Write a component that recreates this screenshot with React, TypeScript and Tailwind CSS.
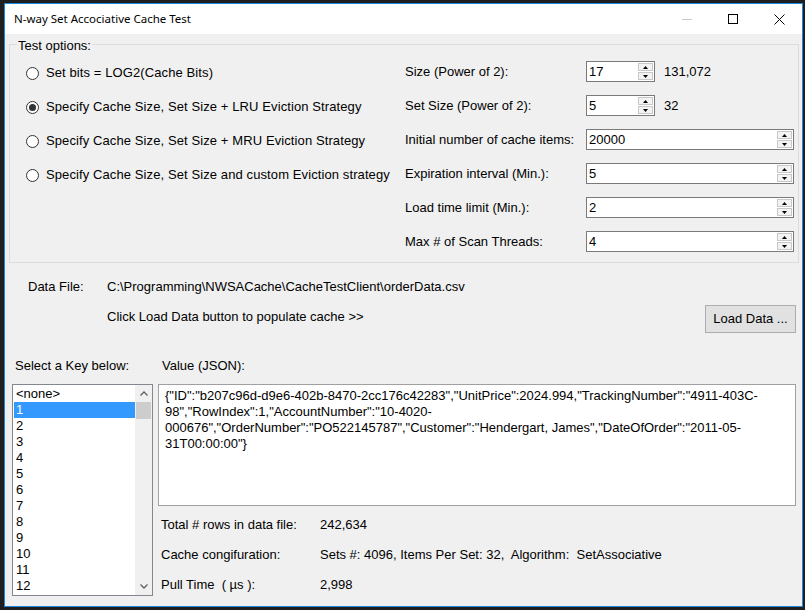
const ui = "font-['Liberation_Sans',Arial,sans-serif]";

function Arrow({ up }: { up?: boolean }) {
  return (
    <svg width="5" height="3" viewBox="0 0 5 3">
      <path d={up ? 'M0 3 L2.5 0 L5 3 Z' : 'M0 0 L2.5 3 L5 0 Z'} fill="#000" />
    </svg>
  );
}

function Spin({ value, wide }: { value: string; wide?: boolean }) {
  return (
    <div className={`flex h-[21px] border border-[#7a7a7a] bg-white ${wide ? 'w-[208px]' : 'w-[69px]'}`}>
      <span className="flex-1 pl-[2px] leading-[19px]">{value}</span>
      <div className="flex w-[16px] flex-col gap-px py-px pr-px">
        <div className="flex flex-1 items-center justify-center border border-[#c8c8c8] bg-[#f3f3f3]">
          <Arrow up />
        </div>
        <div className="flex flex-1 items-center justify-center border border-[#c8c8c8] bg-[#f3f3f3]">
          <Arrow />
        </div>
      </div>
    </div>
  );
}

function Radio({ label, checked }: { label: string; checked?: boolean }) {
  return (
    <div className="flex h-[34px] items-center gap-[7px] whitespace-nowrap">
      <span className="flex h-[13px] w-[13px] items-center justify-center rounded-full border border-[#333] bg-white">
        {checked && <span className="h-[7px] w-[7px] rounded-full bg-[#333]" />}
      </span>
      <span className="tracking-[0.1px]">{label}</span>
    </div>
  );
}

const RADIOS = [
  'Set bits = LOG2(Cache Bits)',
  'Specify Cache Size, Set Size + LRU Eviction Strategy',
  'Specify Cache Size, Set Size + MRU Eviction Strategy',
  'Specify Cache Size, Set Size and custom Eviction strategy',
];

const FIELDS: { label: string; value: string; wide?: boolean; extra?: string }[] = [
  { label: 'Size (Power of 2):', value: '17', extra: '131,072' },
  { label: 'Set Size (Power of 2):', value: '5', extra: '32' },
  { label: 'Initial number of cache items:', value: '20000', wide: true },
  { label: 'Expiration interval (Min.):', value: '5', wide: true },
  { label: 'Load time limit (Min.):', value: '2', wide: true },
  { label: 'Max # of Scan Threads:', value: '4', wide: true },
];

const KEYS = ['<none>', '1', '2', '3', '4', '5', '6', '7', '8', '9', '10', '11', '12'];

const JSON_LINES = [
  '{"ID":"b207c96d-d9e6-402b-8470-2cc176c42283","UnitPrice":2024.994,"TrackingNumber":"4911-403C-',
  '98","RowIndex":1,"AccountNumber":"10-4020-',
  '000676","OrderNumber":"PO522145787","Customer":"Hendergart, James","DateOfOrder":"2011-05-',
  '31T00:00:00"}',
];

const STATS = [
  ['Total # rows in data file:', '242,634'],
  ['Cache congifuration:', 'Sets #: 4096, Items Per Set: 32,  Algorithm:  SetAssociative'],
  ['Pull Time  ( µs ):', '2,998'],
];

export default function App() {
  return (
    <div className="h-[610px] w-[805px] overflow-hidden bg-[#1f1f1f] pl-[4px] pt-[3px]">
      <div className="flex h-[604px] w-[799px] flex-col border border-[#1c86dc]">
        {/* Title bar */}
        <div className="flex h-[30px] items-center bg-white">
          <span className="pl-[9px] font-['Noto_Sans',sans-serif] text-[11.5px] text-black">
            N-way Set Accociative Cache Test
          </span>
          <div className="ml-auto flex h-full">
            <div className="flex w-[46px] items-center justify-center">
              <svg width="10" height="10" viewBox="0 0 10 10">
                <path d="M0 5.5 H10" stroke="#c8c8c8" strokeWidth="1" />
              </svg>
            </div>
            <div className="flex w-[46px] items-center justify-center">
              <svg width="10" height="10" viewBox="0 0 10 10">
                <rect x="0.5" y="0.5" width="9" height="9" fill="none" stroke="#000" strokeWidth="1" />
              </svg>
            </div>
            <div className="flex w-[46px] items-center justify-center">
              <svg width="11" height="11" viewBox="0 0 11 11">
                <path d="M0.5 0.5 L10.5 10.5 M10.5 0.5 L0.5 10.5" stroke="#000" strokeWidth="1" />
              </svg>
            </div>
          </div>
        </div>

        {/* Client area */}
        <div className={`flex flex-1 flex-col bg-[#f0f0f0] text-[13px] leading-[16px] text-black ${ui}`}>
          {/* Test options group */}
          <div className="relative ml-[4px] mr-[3px] mt-[10px] flex h-[219px] border border-[#dcdcdc]">
            <span className="absolute -top-[7px] left-[7px] bg-[#f0f0f0] px-[1px]">Test options:</span>
            <div className="flex w-[395px] flex-col pl-[16px] pt-[11px]">
              {RADIOS.map((r, i) => (
                <Radio key={r} label={r} checked={i === 1} />
              ))}
            </div>
            <div className="flex flex-1 flex-col gap-[13px] pr-[3px] pt-[16px]">
              {FIELDS.map(f => (
                <div key={f.label} className="flex items-center">
                  <span className="w-[181px]">{f.label}</span>
                  <Spin value={f.value} wide={f.wide} />
                  {f.extra && <span className="ml-[9px]">{f.extra}</span>}
                </div>
              ))}
            </div>
          </div>

          {/* Data file */}
          <div className="mt-[16px] flex pl-[23px]">
            <span className="w-[79px]">Data File:</span>
            <span>C:\Programming\NWSACache\CacheTestClient\orderData.csv</span>
          </div>
          <div className="mt-[10px] flex items-start pl-[102px] pr-[6px]">
            <span className="mt-[4px]">Click Load Data button to populate cache &gt;&gt;</span>
            <button className="ml-auto h-[28px] w-[91px] border border-[#adadad] bg-[#e1e1e1] text-[13px]">
              Load Data ...
            </button>
          </div>

          <div className="mt-[25px] flex pl-[10px]">
            <span className="w-[147px]">Select a Key below:</span>
            <span>Value (JSON):</span>
          </div>

          <div className="mt-[10px] flex items-start gap-[5px] pl-[7px]">
            {/* Key list */}
            <div className="flex h-[212px] w-[141px] border border-[#828790] bg-white">
              <div className="flex flex-1 flex-col overflow-hidden pl-px pt-px">
                {KEYS.map((k, i) => (
                  <div
                    key={k}
                    className={`h-[16px] shrink-0 pl-[2px] ${i === 1 ? 'bg-[#3399ff] text-white' : ''}`}
                  >
                    {k}
                  </div>
                ))}
              </div>
              <div className="flex w-[17px] flex-col bg-[#f0f0f0]">
                <div className="flex h-[17px] items-center justify-center">
                  <svg width="8" height="5" viewBox="0 0 8 5">
                    <path d="M0.5 4.5 L4 1 L7.5 4.5" fill="none" stroke="#606060" strokeWidth="1.3" />
                  </svg>
                </div>
                <div className="mx-px h-[17px] bg-[#cdcdcd]" />
                <div className="mt-auto flex h-[17px] items-center justify-center">
                  <svg width="8" height="5" viewBox="0 0 8 5">
                    <path d="M0.5 0.5 L4 4 L7.5 0.5" fill="none" stroke="#606060" strokeWidth="1.3" />
                  </svg>
                </div>
              </div>
            </div>

            {/* Value + stats */}
            <div className="flex flex-col">
              <div className="h-[122px] w-[638px] border border-[#a0a0a0] bg-white pl-[6px] pt-[3px]">
                {JSON_LINES.map(l => (
                  <div key={l} className="whitespace-nowrap">
                    {l}
                  </div>
                ))}
              </div>
              <div className="mt-[11px] flex flex-col gap-[14px] pl-[3px]">
                {STATS.map(([a, b]) => (
                  <div key={a} className="flex whitespace-pre">
                    <span className="w-[159px]">{a}</span>
                    <span>{b}</span>
                  </div>
                ))}
              </div>
            </div>
          </div>
        </div>
      </div>
    </div>
  );
}
